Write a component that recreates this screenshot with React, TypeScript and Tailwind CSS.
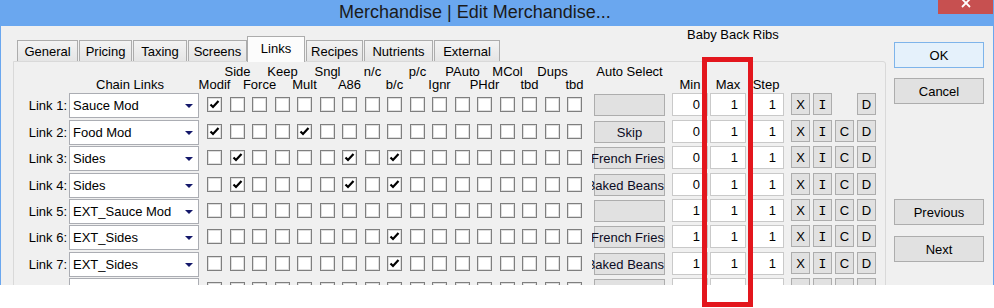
import React from 'react';

type Row = {
  label: string;
  combo: string;
  checks: number[];
  auto: string;
  min: string;
  c: boolean;
  dim?: boolean;
};

const rows: Row[] = [
  { label: 'Link 1:', combo: 'Sauce Mod', checks: [0], auto: '', min: '0', c: false },
  { label: 'Link 2:', combo: 'Food Mod', checks: [0, 4], auto: 'Skip', min: '0', c: true },
  { label: 'Link 3:', combo: 'Sides', checks: [1, 6, 8], auto: 'French Fries', min: '0', c: true },
  { label: 'Link 4:', combo: 'Sides', checks: [1, 6, 8], auto: 'Baked Beans', min: '0', c: true },
  { label: 'Link 5:', combo: 'EXT_Sauce Mod', checks: [], auto: '', min: '1', c: true },
  { label: 'Link 6:', combo: 'EXT_Sides', checks: [8], auto: 'French Fries', min: '1', c: true },
  { label: 'Link 7:', combo: 'EXT_Sides', checks: [8], auto: 'Baked Beans', min: '1', c: true },
  { label: 'Link 8:', combo: 'NONE', checks: [], auto: '', min: '0', c: true, dim: true },
];

const rowH = ['h-[27px]', 'h-[26px]', 'h-[27px]', 'h-[26px]', 'h-[26px]', 'h-[27px]', 'h-[26px]', 'h-[26px]'];

const line1: Record<number, string> = { 1: 'Side', 3: 'Keep', 5: 'Sngl', 7: 'n/c', 9: 'p/c', 11: 'PAuto', 13: 'MCol', 15: 'Dups' };
const line2: Record<number, string> = { 0: 'Modif', 2: 'Force', 4: 'Mult', 6: 'A86', 8: 'b/c', 10: 'Ignr', 12: 'PHdr', 14: 'tbd', 16: 'tbd' };

const cols = Array.from({ length: 17 }, (_, i) => i);

function cellW(i: number) {
  return i % 2 === 0 ? 'w-[23px]' : 'w-[22px]';
}

function Check({ checked }: { checked: boolean }) {
  return (
    <div className="w-[15px] h-[15px] border border-[#7f7f7f] bg-white shadow-[inset_0_0_0_1px_#dedede] flex items-center justify-center">
      {checked && (
        <svg width="13" height="13" viewBox="0 0 13 13">
          <path d="M2.5 6.5 L5 9 L10.5 3" fill="none" stroke="#000" strokeWidth="2.2" />
        </svg>
      )}
    </div>
  );
}

function HeaderLine({ labels, top }: { labels: Record<number, string>; top: boolean }) {
  return (
    <div className={`flex h-[13px] leading-[13px] whitespace-nowrap ${top ? 'mt-[3px]' : ''}`}>
      <div className="w-[55px]" />
      <div className="w-[130px] pl-[27px]">{top ? '' : 'Chain Links'}</div>
      <div className="ml-[8px] flex">
        {cols.map((i) => (
          <div key={i} className={`${cellW(i)} flex`}>
            <div className="w-[15px] flex justify-center">{labels[i] ?? ''}</div>
          </div>
        ))}
      </div>
      <div className="ml-[4px] w-[71px] flex justify-center">{top ? 'Auto Select' : ''}</div>
      <div className="ml-[7px] w-[36px] flex justify-center">{top ? '' : 'Min'}</div>
      <div className="ml-[2px] w-[36px] flex justify-center">{top ? '' : 'Max'}</div>
      <div className="ml-[2px] w-[36px] flex justify-center">{top ? '' : 'Step'}</div>
    </div>
  );
}

function SmallBtn({ ch, mono }: { ch: string; mono?: boolean }) {
  return (
    <div
      className={`w-[19px] h-[22px] bg-[#e1e1e1] border border-[#adadad] flex items-center justify-center leading-[13px] ${
        mono ? "font-['DejaVu_Sans_Mono',monospace] text-[13px]" : ''
      }`}
    >
      {ch}
    </div>
  );
}

function LinkRow({ r, i }: { r: Row; i: number }) {
  const txt = r.dim ? 'text-[#8a8a8a]' : 'text-black';
  const long = r.auto.length > 6;
  return (
    <div className={`flex items-start ${rowH[i]} shrink-0`}>
      <div className={`w-[55px] h-[25px] flex items-center justify-end pr-[2px] leading-[13px] ${txt}`}>{r.label}</div>
      <div className="w-[130px] h-[25px] bg-white border border-[#abadb3] flex items-center">
        <div className={`flex-1 pl-[3px] leading-[13px] whitespace-nowrap ${txt}`}>{r.combo}</div>
        <svg width="8" height="4" viewBox="0 0 8 4" className="mr-[5px]">
          <path d="M0 0 H8 L4 4 Z" fill="#14186a" />
        </svg>
      </div>
      <div className="ml-[8px] flex">
        {cols.map((c) => (
          <div key={c} className={`${cellW(c)} h-[23px] flex items-center`}>
            <Check checked={r.checks.includes(c)} />
          </div>
        ))}
      </div>
      <div className="ml-[2px] w-[75px] h-[24px] overflow-hidden flex items-start">
        <div
          className={`ml-[2px] mt-[1px] w-[71px] h-[22px] shrink-0 bg-[#e1e1e1] border border-[#adadad] flex items-center whitespace-nowrap leading-[13px] text-[#0c0c24] ${
            long ? 'justify-end' : 'justify-center'
          }`}
        >
          {r.auto}
        </div>
      </div>
      <div className="ml-[5px] w-[36px] h-[23px] bg-white border border-[#c9c9c9] flex items-center justify-end pr-[7px] leading-[13px]">
        {r.min}
      </div>
      <div className="ml-[2px] w-[36px] h-[23px] bg-white border border-[#c9c9c9] flex items-center justify-end pr-[7px] leading-[13px]">
        1
      </div>
      <div className="ml-[2px] w-[36px] h-[23px] bg-white border border-[#c9c9c9] flex items-center justify-end pr-[7px] leading-[13px]">
        1
      </div>
      <div className="ml-[7px] flex gap-[3px]">
        <SmallBtn ch="X" />
        <SmallBtn ch="I" mono />
        {r.c ? <SmallBtn ch="C" /> : <div className="w-[19px]" />}
        <SmallBtn ch="D" />
      </div>
    </div>
  );
}

const tabs = [
  { name: 'General', w: 'w-[61px]' },
  { name: 'Pricing', w: 'w-[53px]' },
  { name: 'Taxing', w: 'w-[54px]' },
  { name: 'Screens', w: 'w-[59px]' },
  { name: 'Links', w: 'w-[58px]', sel: true },
  { name: 'Recipes', w: 'w-[57px]' },
  { name: 'Nutrients', w: 'w-[69px]' },
  { name: 'External', w: 'w-[66px]' },
];

function WinBtn({ label, def, cls }: { label: string; def?: boolean; cls: string }) {
  return (
    <div
      className={`${cls} w-[90px] h-[26px] flex items-center justify-center leading-[13px] border ${
        def ? 'bg-[#e5f1fb] border-[#7eb4ea]' : 'bg-[#e1e1e1] border-[#adadad]'
      }`}
    >
      {label}
    </div>
  );
}

export default function App() {
  return (
    <div className="relative w-[994px] h-[308px] bg-white font-['Liberation_Sans',Arial,sans-serif] text-[13px] text-black overflow-hidden">
      <div className="w-[994px] h-[285px] overflow-hidden bg-[#f0f0f0] flex flex-col">
        {/* title bar */}
        <div className="h-[26px] bg-[#6aa7ef] flex shrink-0">
          <div className="flex-1 pl-[339px] text-[18px] leading-[24px] text-[#1b1b1b] whitespace-nowrap">
            Merchandise | Edit Merchandise...
          </div>
          <div className="w-[55px] h-[14px] bg-[#c75050] flex justify-center items-end overflow-hidden mr-[1px]">
            <svg width="10" height="10" viewBox="0 0 10 10" className="mb-[6px] shrink-0">
              <path d="M1 1L9 9M9 1L1 9" stroke="#fff" strokeWidth="1.8" />
            </svg>
          </div>
        </div>

        {/* body */}
        <div className="flex flex-1 border-l border-r border-[#6aa7ef] min-h-0">
          <div className="ml-[12px] w-[873px] flex flex-col">
            {/* tab strip */}
            <div className="h-[35px] flex items-end pl-[4px] gap-[1px] shrink-0">
              {tabs.map((t) =>
                t.sel ? (
                  <div
                    key={t.name}
                    className={`${t.w} -ml-[1px] h-[26px] -mb-[1px] relative z-10 bg-[#fcfcfc] border border-b-0 border-[#acacac] flex items-center justify-center pb-[2px] leading-[13px]`}
                  >
                    {t.name}
                  </div>
                ) : (
                  <div
                    key={t.name}
                    className={`${t.w} h-[21px] border border-b-0 border-[#acacac] bg-linear-to-b from-[#f3f3f3] to-[#e5e5e5] flex items-center justify-center leading-[13px]`}
                  >
                    {t.name}
                  </div>
                )
              )}
              <div className="self-start ml-[186px] pt-[1px] leading-[16px] whitespace-nowrap">Baby Back Ribs</div>
            </div>

            {/* panel */}
            <div className="h-[400px] shrink-0 border border-[#d9d9d9] rounded-tr-[3px] bg-[#f0f0f0] flex flex-col">
              <HeaderLine labels={line1} top />
              <HeaderLine labels={line2} top={false} />
              <div className="mt-[2px] flex flex-col">
                {rows.map((r, i) => (
                  <LinkRow key={i} r={r} i={i} />
                ))}
              </div>
            </div>
          </div>

          {/* right buttons */}
          <div className="ml-[8px] w-[90px] flex flex-col">
            <WinBtn label="OK" def cls="mt-[16px]" />
            <WinBtn label="Cancel" cls="mt-[10px]" />
            <WinBtn label="Previous" cls="mt-[95px]" />
            <WinBtn label="Next" cls="mt-[11px]" />
          </div>
        </div>
      </div>

      {/* red annotation rectangle */}
      <div className="absolute left-[702px] top-[57px] w-[51px] h-[250px] border-[5px] border-[#e3161d]" />
    </div>
  );
}
